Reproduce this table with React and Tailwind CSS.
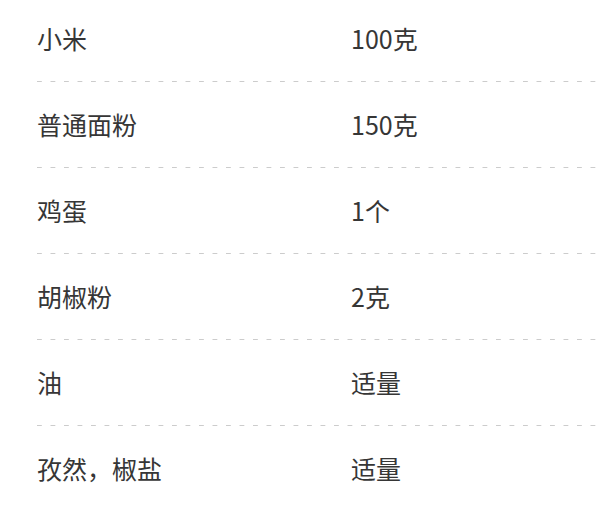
export default function App() {
  const rows = [
    ["小米", "100克"],
    ["普通面粉", "150克"],
    ["鸡蛋", "1个"],
    ["胡椒粉", "2克"],
    ["油", "适量"],
    ["孜然，椒盐", "适量"],
  ];
  return (
    <div className="w-[600px] h-[523px] overflow-hidden bg-white">
      <div className="mt-[-4px] pl-[37px] font-['Noto_Sans_CJK_SC','Noto_Sans',sans-serif] text-[25px] text-[#363636]">
        {rows.map(([a, b], i) => (
          <div key={i}>
            <div className="h-[85px] flex items-center">
              <div className="w-[314px]">{a}</div>
              <div>{b}</div>
            </div>
            {i < rows.length - 1 && (
              <div className="h-px bg-[linear-gradient(to_right,#cccccc_5px,transparent_5px)] bg-[length:13.5px_1px]" />
            )}
          </div>
        ))}
      </div>
    </div>
  );
}
